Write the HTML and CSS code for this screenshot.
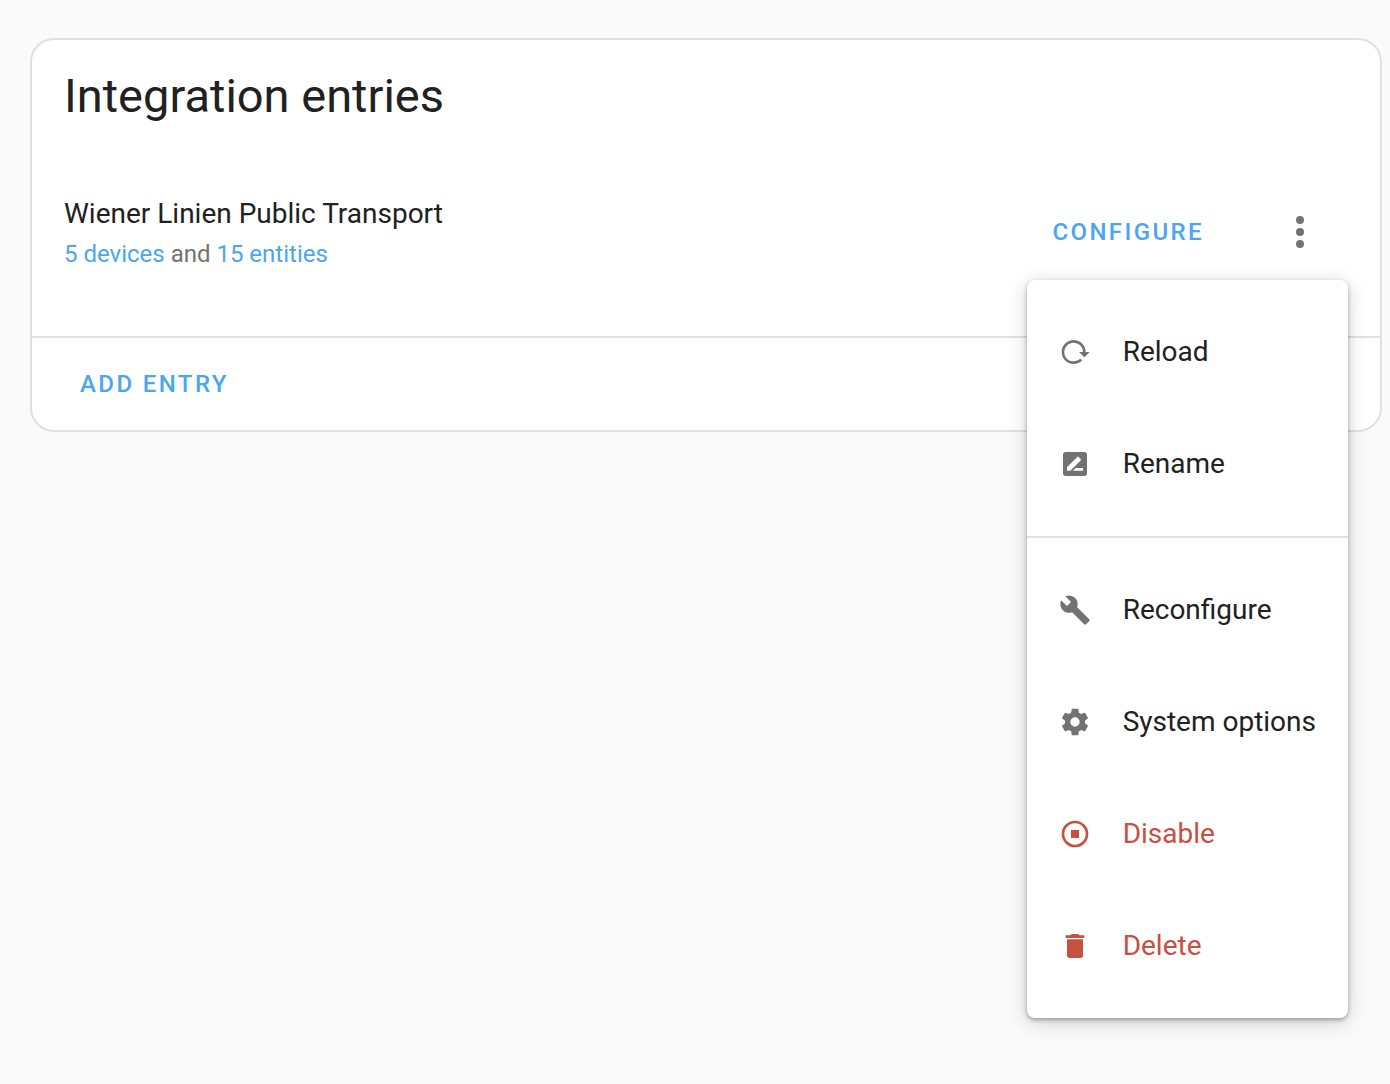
FILE: index.html
```html
<!DOCTYPE html>
<html lang="en">
<head>
<meta charset="utf-8">
<meta name="viewport" content="width=device-width, initial-scale=1">
<title>Integration entries</title>
<link rel="stylesheet" href="styles.css">
</head>
<body>
<main class="page">
  <section class="card">
    <h1 class="card-title">Integration entries</h1>
    <div class="entry">
      <div class="entry-text">
        <div class="entry-name">Wiener Linien Public Transport</div>
        <div class="entry-meta"><a href="#devices">5 devices</a> and <a href="#entities">15 entities</a></div>
      </div>
      <button class="text-button" type="button">Configure</button>
      <div class="overflow">
        <button class="icon-button" type="button" aria-label="Menu" aria-haspopup="menu" aria-expanded="true">
          <svg viewBox="0 0 24 24" aria-hidden="true"><path d="M12,16A2,2 0 0,1 14,18A2,2 0 0,1 12,20A2,2 0 0,1 10,18A2,2 0 0,1 12,16M12,10A2,2 0 0,1 14,12A2,2 0 0,1 12,14A2,2 0 0,1 10,12A2,2 0 0,1 12,10M12,4A2,2 0 0,1 14,6A2,2 0 0,1 12,8A2,2 0 0,1 10,6A2,2 0 0,1 12,4Z"/></svg>
        </button>
        <div class="menu" role="menu">
          <button class="menu-item" type="button" role="menuitem">
            <svg viewBox="0 0 24 24" aria-hidden="true"><path d="M2 12C2 16.97 6.03 21 11 21C13.39 21 15.68 20.06 17.4 18.4L15.9 16.9C14.63 18.25 12.86 19 11 19C4.76 19 1.64 11.46 6.05 7.05C10.46 2.64 18 5.77 18 12H15L19 16H19.1L23 12H20C20 7.03 15.97 3 11 3C6.03 3 2 7.03 2 12Z"/></svg>
            <span>Reload</span>
          </button>
          <button class="menu-item" type="button" role="menuitem">
            <svg viewBox="0 0 24 24" aria-hidden="true"><path d="M18,17H10.5L12.5,15H18M6,17V14.5L13.88,6.65C14.07,6.45 14.39,6.45 14.59,6.65L16.35,8.41C16.55,8.61 16.55,8.92 16.35,9.12L8.47,17M19,3H5C3.89,3 3,3.89 3,5V19A2,2 0 0,0 5,21H19A2,2 0 0,0 21,19V5C21,3.89 20.1,3 19,3Z"/></svg>
            <span>Rename</span>
          </button>
          <hr class="menu-divider">
          <button class="menu-item" type="button" role="menuitem">
            <svg viewBox="0 0 24 24" aria-hidden="true"><path d="M22.7,19L13.6,9.9C14.5,7.6 14,4.9 12.1,3C10.1,1 7.1,0.6 4.7,1.7L9,6L6,9L1.6,4.7C0.4,7.1 0.9,10.1 2.9,12.1C4.8,14 7.5,14.5 9.8,13.6L18.9,22.7C19.3,23.1 19.9,23.1 20.3,22.7L22.6,20.4C23.1,20 23.1,19.3 22.7,19Z"/></svg>
            <span>Reconfigure</span>
          </button>
          <button class="menu-item" type="button" role="menuitem">
            <svg viewBox="0 0 24 24" aria-hidden="true"><path d="M12,15.5A3.5,3.5 0 0,1 8.5,12A3.5,3.5 0 0,1 12,8.5A3.5,3.5 0 0,1 15.5,12A3.5,3.5 0 0,1 12,15.5M19.43,12.97C19.47,12.65 19.5,12.33 19.5,12C19.5,11.67 19.47,11.34 19.43,11L21.54,9.37C21.73,9.22 21.78,8.95 21.66,8.73L19.66,5.27C19.54,5.05 19.27,4.96 19.05,5.05L16.56,6.05C16.04,5.66 15.5,5.32 14.87,5.07L14.5,2.42C14.46,2.18 14.25,2 14,2H10C9.75,2 9.54,2.18 9.5,2.42L9.13,5.07C8.5,5.32 7.96,5.66 7.44,6.05L4.95,5.05C4.73,4.96 4.46,5.05 4.34,5.27L2.34,8.73C2.21,8.95 2.27,9.22 2.46,9.37L4.57,11C4.53,11.34 4.5,11.67 4.5,12C4.5,12.33 4.53,12.65 4.57,12.97L2.46,14.63C2.27,14.78 2.21,15.05 2.34,15.27L4.34,18.73C4.46,18.95 4.73,19.03 4.95,18.95L7.44,17.94C7.96,18.34 8.5,18.68 9.13,18.93L9.5,21.58C9.54,21.82 9.75,22 10,22H14C14.25,22 14.46,21.82 14.5,21.58L14.87,18.93C15.5,18.67 16.04,18.34 16.56,17.94L19.05,18.95C19.27,19.03 19.54,18.95 19.66,18.73L21.66,15.27C21.78,15.05 21.73,14.78 21.54,14.63L19.43,12.97Z"/></svg>
            <span>System options</span>
          </button>
          <button class="menu-item danger" type="button" role="menuitem">
            <svg viewBox="0 0 24 24" aria-hidden="true"><path d="M12,2A10,10 0 0,0 2,12A10,10 0 0,0 12,22A10,10 0 0,0 22,12A10,10 0 0,0 12,2M12,4C16.41,4 20,7.59 20,12C20,16.41 16.41,20 12,20C7.59,20 4,16.41 4,12C4,7.59 7.59,4 12,4M9,9V15H15V9"/></svg>
            <span>Disable</span>
          </button>
          <button class="menu-item danger" type="button" role="menuitem">
            <svg viewBox="0 0 24 24" aria-hidden="true"><path d="M19,4H15.5L14.5,3H9.5L8.5,4H5V6H19M6,19A2,2 0 0,0 8,21H16A2,2 0 0,0 18,19V7H6V19Z"/></svg>
            <span>Delete</span>
          </button>
        </div>
      </div>
    </div>
    <footer class="card-actions">
      <button class="text-button" type="button">Add entry</button>
    </footer>
  </section>
</main>
</body>
</html>
```

FILE: styles.css
```css
:root {
  --text: #212121;
  --text-secondary: #727272;
  --primary: #4ba6ee;
  --danger: #c94f40;
  --divider: #e0e0e0;
}

* {
  box-sizing: border-box;
}

body {
  margin: 0;
  background: #fafafa;
  color: var(--text);
  font-family: Roboto, "Noto Sans", sans-serif;
  font-size: 28px;
  line-height: 40px;
}

button {
  margin: 0;
  border: 0;
  background: none;
  color: inherit;
  font: inherit;
  cursor: pointer;
}

svg {
  display: block;
  flex: none;
  fill: currentColor;
}

a {
  color: var(--primary);
  text-decoration: none;
}

.page {
  min-height: 100vh;
  padding: 38px 8px 38px 30px;
}

.card {
  border: 2px solid var(--divider);
  border-radius: 24px;
  background: #fff;
}

.card-title {
  margin: 0;
  padding: 24px 32px;
  font-size: 47px;
  font-weight: 400;
  line-height: 64px;
}

.entry {
  display: flex;
  align-items: center;
  min-height: 144px;
  margin: 8px 0 32px;
  padding: 0 32px;
}

.entry-text {
  flex: 1;
  padding-top: 4px;
}

.entry-meta {
  color: var(--text-secondary);
  font-size: 24px;
}

.text-button {
  height: 72px;
  padding: 0 16px;
  color: var(--primary);
  font-size: 24px;
  font-weight: 500;
  letter-spacing: 0.1em;
  text-transform: uppercase;
}

.overflow {
  position: relative;
  margin-left: 32px;
}

.icon-button {
  display: grid;
  place-items: center;
  width: 96px;
  height: 96px;
  padding: 0;
  color: var(--text-secondary);
}

.icon-button svg {
  width: 48px;
  height: 48px;
}

.menu {
  position: absolute;
  top: 100%;
  right: 0;
  z-index: 1;
  padding: 16px 0;
  border-radius: 8px;
  background: #fff;
  box-shadow: 0 2px 4px rgba(0, 0, 0, 0.3), 0 4px 20px rgba(0, 0, 0, 0.18);
}

.menu-item {
  display: flex;
  align-items: center;
  gap: 32px;
  width: 100%;
  height: 112px;
  padding: 0 32px;
  white-space: nowrap;
}

.menu-item svg {
  width: 32px;
  height: 32px;
  color: var(--text-secondary);
}

.menu-divider {
  margin: 16px 0;
  border: 0;
  border-top: 2px solid var(--divider);
}

.danger,
.danger svg {
  color: var(--danger);
}

.card-actions {
  padding: 10px 32px;
  border-top: 2px solid var(--divider);
}
```
